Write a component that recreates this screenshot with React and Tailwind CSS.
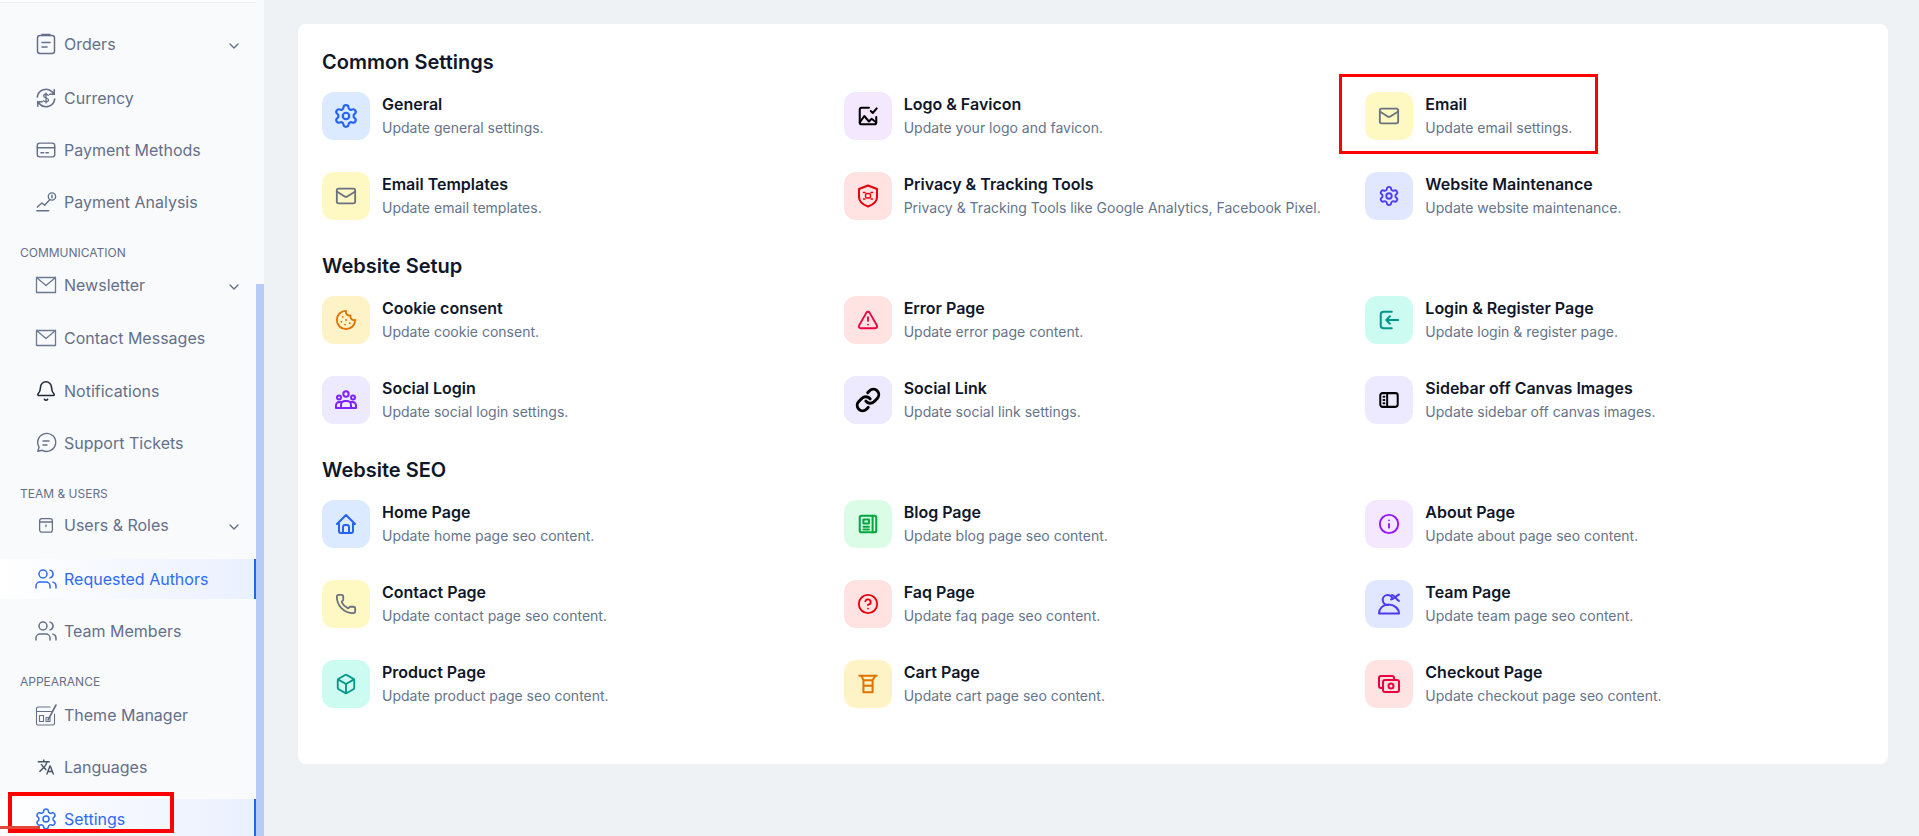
import React from 'react';
import {
  Settings, Mail, Cookie, TriangleAlert, Link as LinkIcon, Info, Phone, CircleHelp, Box,
  ChevronDown, Bell, Users,
} from 'lucide-react';
import { TbHome } from 'react-icons/tb';
import { MdTranslate } from 'react-icons/md';

// small wrapper for the hand drawn icons
const Svg = ({ size = 22, sw = 2, className = '', children }) => (
  <svg width={size} height={size} viewBox="0 0 24 24" fill="none" stroke="currentColor" strokeWidth={sw} strokeLinecap="round" strokeLinejoin="round" className={`shrink-0 ${className}`}>
    {children}
  </svg>
);

const OrdersIcon = () => (
  <Svg size={24} sw={1.500}>
    <rect x="3.500" y="3.500" width="17" height="18" rx="2.500" />
    <path d="M8 3.500V2.600h8v.9M8 10.500h8M8 15h5" />
  </Svg>
);
const CurrencyIcon = () => (
  <Svg sw={1.700}>
    <path d="M2.500 11a9.500 9.500 0 0 1 16.500-5.400L21 8M21 3v5h-5" />
    <path d="M21.500 13a9.500 9.500 0 0 1-16.500 5.400L3 16M3 21v-5h5" />
    <path d="M14.500 9.200c-.5-.9-1.400-1.300-2.500-1.300-1.500 0-2.500.8-2.500 2 0 2.800 5.200 1.400 5.200 4.200 0 1.200-1.100 2-2.700 2-1.200 0-2.200-.5-2.700-1.400M12 6.500v11" strokeWidth="1.400" />
  </Svg>
);
const CardIcon = () => (
  <Svg sw={1.600}>
    <rect x="2.500" y="4.500" width="19" height="15" rx="2.500" />
    <path d="M2.500 9.500h19M6.500 15h3M12 15h2.500" />
  </Svg>
);
const AnalysisIcon = () => (
  <Svg sw={1.500}>
    <path d="M2 21.500h13M2.500 17.500l5-4.500 3 2.500 5.500-6" />
    <circle cx="18.500" cy="6" r="4" />
    <path d="M18.500 4.500v3" />
  </Svg>
);
const OpenMailIcon = () => (
  <Svg size={24} sw={1.300} className="text-[#6b7a92]">
    <path d="M2.500 4.500h19v15h-19zM2.500 4.500l9.500 8 9.500-8" />
  </Svg>
);
const TicketIcon = () => (
  <Svg size={24} sw={1.400}>
    <path d="M3.800 20.200l1.300-4a9 9 0 1 1 3.300 3.100z" />
    <path d="M9 10h6M9 14h4" />
  </Svg>
);
const RolesIcon = () => (
  <Svg size={18} sw={1.700}>
    <path d="M6.500 3.500h11a3 3 0 0 1 3 3v12a3 3 0 0 1-3 3h-11a3 3 0 0 1-3-3v-12a3 3 0 0 1 3-3zM3.500 8h17M12 12v2" />
  </Svg>
);
const ThemeIcon = () => (
  <Svg size={24} sw={1.100}>
    <path d="M16 4H4a1.500 1.500 0 0 0-1.500 1.500v15A1.500 1.500 0 0 0 4 22h15a1.500 1.500 0 0 0 1.500-1.500V11M2.500 8.500h15" />
    <path d="M5.500 12.500h4v6h-4zM12 14.500h4v4h-4z" />
    <path d="M14 17l8-15" strokeWidth="1.600" />
  </Svg>
);
const LogoIcon = () => (
  <Svg className="text-black" sw={2.200}>
    <path d="M13 3H5a2 2 0 0 0-2 2v14a2 2 0 0 0 2 2h14a2 2 0 0 0 2-2v-6" />
    <path d="M3 19l5-7 5 6 3-3 5 4M15 6.500l2.200 2.200 4.300-5" />
  </Svg>
);
const PrivacyIcon = () => (
  <Svg className="text-red-600" size={24}>
    <path d="M12 1.500l9 3.500v8c0 4.500-3.500 7.500-9 9.500-5.500-2-9-5-9-9.500V5z" />
    <g strokeWidth="1.400">
      <path d="M7.500 8.500h1.500M15 8.500h1.500M7.500 15h1.500M15 15h1.500" />
      <rect x="9.500" y="9.500" width="5" height="4.500" rx="1.500" />
    </g>
  </Svg>
);
const LoginIcon = () => (
  <Svg className="text-teal-600" sw={2.200}>
    <path d="M15 3H6a3 3 0 0 0-3 3v12a3 3 0 0 0 3 3h9" />
    <path d="M22 12H9M13 8l-4 4 4 4" />
  </Svg>
);
const GroupIcon = () => (
  <Svg size={24} className="text-violet-600">
    <circle cx="12" cy="6" r="2.700" />
    <circle cx="5" cy="9.500" r="2" />
    <circle cx="19" cy="9.500" r="2" />
    <path d="M2 20v-2.500a3.500 3.500 0 0 1 3.500-3.500h2M22 20v-2.500a3.500 3.500 0 0 0-3.500-3.500h-2M2 20h20M7 20v-3a4 4 0 0 1 4-4h2a4 4 0 0 1 4 4v3" />
  </Svg>
);
const SidebarIcon = () => (
  <Svg className="text-black" sw={2.200}>
    <rect x="2.500" y="4.500" width="19" height="15" rx="2.500" />
    <path d="M10 4.500v15M6 8.500h1M6 12h1M6 15.500h1" />
  </Svg>
);
const BlogIcon = () => (
  <Svg className="text-green-600" sw={2.200}>
    <rect x="3" y="3" width="18" height="18" rx="2" />
    <path d="M17 3v18M7 7h6v4.500H7zM7 15h6M7 18h6" />
  </Svg>
);
const TeamIcon = () => (
  <Svg className="text-indigo-600" size={24}>
    <path d="M15.500 6.500A5 5 0 1 0 11 13" />
    <path d="M2 21.500c0-5 4-9 9.500-9s10.500 4 10.500 9z" />
    <path d="M14 7.500c3 0 4-3 8-5M15 3c2 0 4 4 7 6" />
  </Svg>
);
const CartIcon = () => (
  <Svg className="text-amber-600" sw={2.200}>
    <path d="M2.500 3h19M5 3l2 5v13h10V8l3-5M7 8h10M7 14h10" />
  </Svg>
);
const CheckoutIcon = () => (
  <Svg className="text-rose-600" size={24}>
    <path d="M17 7V6a2 2 0 0 0-2-2H4a2 2 0 0 0-2 2v8a2 2 0 0 0 2 2h2" />
    <rect x="6" y="8" width="16" height="12" rx="2" />
    <circle cx="14" cy="14" r="2.500" />
  </Svg>
);

const Item = ({ icon, label, chevron, active, mb = 'mb-3' }) => (
  <div className={`flex h-10 shrink-0 items-center pl-[34px] pr-[14px] text-base ${mb} ${active ? 'border-r-2 border-[#2563eb] bg-gradient-to-r from-white to-[#eaf0fe] text-[#2f6bf5]' : 'text-[#64708a]'}`}>
    <span className="flex w-6 shrink-0 items-center justify-center">{icon}</span>
    <span className="ml-[6px] flex-1">{label}</span>
    {chevron && <ChevronDown size={16} className="mt-1 text-[#64708a]" />}
  </div>
);

const SectionLabel = ({ children, className = '' }) => (
  <div className={`h-[18px] shrink-0 pl-5 text-xs leading-[18px] uppercase text-[#64708a] ${className}`}>{children}</div>
);

const Sidebar = () => (
  <aside className="flex h-full w-[264px] shrink-0 overflow-hidden bg-[#f9fafc]">
    <div className="flex w-[256px] shrink-0 flex-col">
      <div className="h-[2px] shrink-0 bg-white" />
      <div className="mb-[21px] h-[1px] shrink-0 bg-[#eceef2]" />
      <Item icon={<OrdersIcon />} label="Orders" chevron mb="mb-[14px]" />
      <Item icon={<CurrencyIcon />} label="Currency" />
      <Item icon={<CardIcon />} label="Payment Methods" />
      <Item icon={<AnalysisIcon />} label="Payment Analysis" />
      <SectionLabel className="mt-[10px] mb-[3px]">Communication</SectionLabel>
      <Item icon={<OpenMailIcon />} label="Newsletter" chevron mb="mb-[13px]" />
      <Item icon={<OpenMailIcon />} label="Contact Messages" mb="mb-[13px]" />
      <Item icon={<Bell size={22} strokeWidth={1.700} className="shrink-0 text-[#1e293b]" />} label="Notifications" />
      <Item icon={<TicketIcon />} label="Support Tickets" />
      <SectionLabel className="mt-[10px] mb-[2px]">Team &amp; Users</SectionLabel>
      <Item icon={<RolesIcon />} label="Users &amp; Roles" chevron mb="mb-[14px]" />
      <Item icon={<Users size={24} strokeWidth={1.500} className="shrink-0" />} label="Requested Authors" active />
      <Item icon={<Users size={24} strokeWidth={1.500} className="shrink-0" />} label="Team Members" />
      <SectionLabel className="mt-[10px] mb-[4px]">Appearance</SectionLabel>
      <Item icon={<ThemeIcon />} label="Theme Manager" />
      <Item icon={<MdTranslate size={18} className="shrink-0 text-[#475569]" />} label="Languages" />
      <Item icon={<Settings size={24} strokeWidth={1.500} className="shrink-0" />} label="Settings" active />
    </div>
    <div className="flex w-2 shrink-0 flex-col">
      <div className="h-[284px] shrink-0" />
      <div className="flex-1 bg-[#b6cbf6]" />
    </div>
  </aside>
);

const sections = [
  {
    title: 'Common Settings',
    items: [
      { bg: 'bg-blue-100', icon: <Settings size={26} className="text-[#2463f5]" />, title: 'General', desc: 'Update general settings.' },
      { bg: 'bg-purple-100', icon: <LogoIcon />, title: 'Logo & Favicon', desc: 'Update your logo and favicon.' },
      { bg: 'bg-yellow-100', icon: <Mail size={22} className="text-gray-500" />, title: 'Email', desc: 'Update email settings.' },
      { bg: 'bg-yellow-100', icon: <Mail size={22} className="text-gray-500" />, title: 'Email Templates', desc: 'Update email templates.' },
      { bg: 'bg-red-100', icon: <PrivacyIcon />, title: 'Privacy & Tracking Tools', desc: 'Privacy & Tracking Tools like Google Analytics, Facebook Pixel.' },
      { bg: 'bg-indigo-100', icon: <Settings size={22} className="text-indigo-600" />, title: 'Website Maintenance', desc: 'Update website maintenance.' },
    ],
  },
  {
    title: 'Website Setup',
    items: [
      { bg: 'bg-amber-100', icon: <Cookie size={22} className="text-amber-600" />, title: 'Cookie consent', desc: 'Update cookie consent.' },
      { bg: 'bg-red-100', icon: <TriangleAlert size={22} className="text-rose-600" />, title: 'Error Page', desc: 'Update error page content.' },
      { bg: 'bg-teal-100', icon: <LoginIcon />, title: 'Login & Register Page', desc: 'Update login & register page.' },
      { bg: 'bg-violet-100', icon: <GroupIcon />, title: 'Social Login', desc: 'Update social login settings.' },
      { bg: 'bg-violet-100', icon: <LinkIcon size={26} strokeWidth={2.700} className="text-black" />, title: 'Social Link', desc: 'Update social link settings.' },
      { bg: 'bg-violet-100', icon: <SidebarIcon />, title: 'Sidebar off Canvas Images', desc: 'Update sidebar off canvas images.' },
    ],
  },
  {
    title: 'Website SEO',
    items: [
      { bg: 'bg-blue-100', icon: <TbHome size={24} className="text-[#2463f5]" />, title: 'Home Page', desc: 'Update home page seo content.' },
      { bg: 'bg-green-100', icon: <BlogIcon />, title: 'Blog Page', desc: 'Update blog page seo content.' },
      { bg: 'bg-purple-100', icon: <Info size={22} className="text-purple-600" />, title: 'About Page', desc: 'Update about page seo content.' },
      { bg: 'bg-yellow-100', icon: <Phone size={22} className="text-gray-500" />, title: 'Contact Page', desc: 'Update contact page seo content.' },
      { bg: 'bg-red-100', icon: <CircleHelp size={22} className="text-red-600" />, title: 'Faq Page', desc: 'Update faq page seo content.' },
      { bg: 'bg-indigo-100', icon: <TeamIcon />, title: 'Team Page', desc: 'Update team page seo content.' },
      { bg: 'bg-teal-100', icon: <Box size={22} className="text-teal-600" />, title: 'Product Page', desc: 'Update product page seo content.' },
      { bg: 'bg-amber-100', icon: <CartIcon />, title: 'Cart Page', desc: 'Update cart page seo content.' },
      { bg: 'bg-red-100', icon: <CheckoutIcon />, title: 'Checkout Page', desc: 'Update checkout page seo content.' },
    ],
  },
];

const SettingCard = ({ bg, icon, title, desc }) => (
  <div className="flex items-center gap-3">
    <div className={`flex h-12 w-12 shrink-0 items-center justify-center rounded-xl ${bg}`}>{icon}</div>
    <div>
      <div className="text-base leading-6 font-semibold text-[#0f172a]">{title}</div>
      <div className="text-sm leading-6 text-[#64748b]">{desc}</div>
    </div>
  </div>
);

export default function App() {
  return (
    <div className="relative flex h-[836px] overflow-hidden bg-[#eff2f5] font-['Inter',sans-serif]">
      <Sidebar />
      <main className="flex-1 pt-6 pl-[34px] pr-[31px]">
        <div className="rounded-lg bg-white px-6 pt-6 pb-6">
          {sections.map((section) => (
            <section key={section.title} className="mb-8">
              <h2 className="mb-4 text-xl leading-7 font-semibold text-[#0f172a]">{section.title}</h2>
              <div className="grid grid-cols-3 gap-x-[23px] gap-y-8">
                {section.items.map((item) => (
                  <SettingCard key={item.title} {...item} />
                ))}
              </div>
            </section>
          ))}
        </div>
      </main>

      {/* red annotation boxes from the screenshot */}
      <div className="absolute left-2 top-[792px] h-[41px] w-[166px] border-4 border-[#ff0000]" />
      <div className="absolute left-0 top-[826px] h-[3px] w-10 bg-[#e4483a]" />
      <div className="absolute left-[1339px] top-[74px] h-[80px] w-[259px] border-[3px] border-[#ff0000]" />
    </div>
  );
}
